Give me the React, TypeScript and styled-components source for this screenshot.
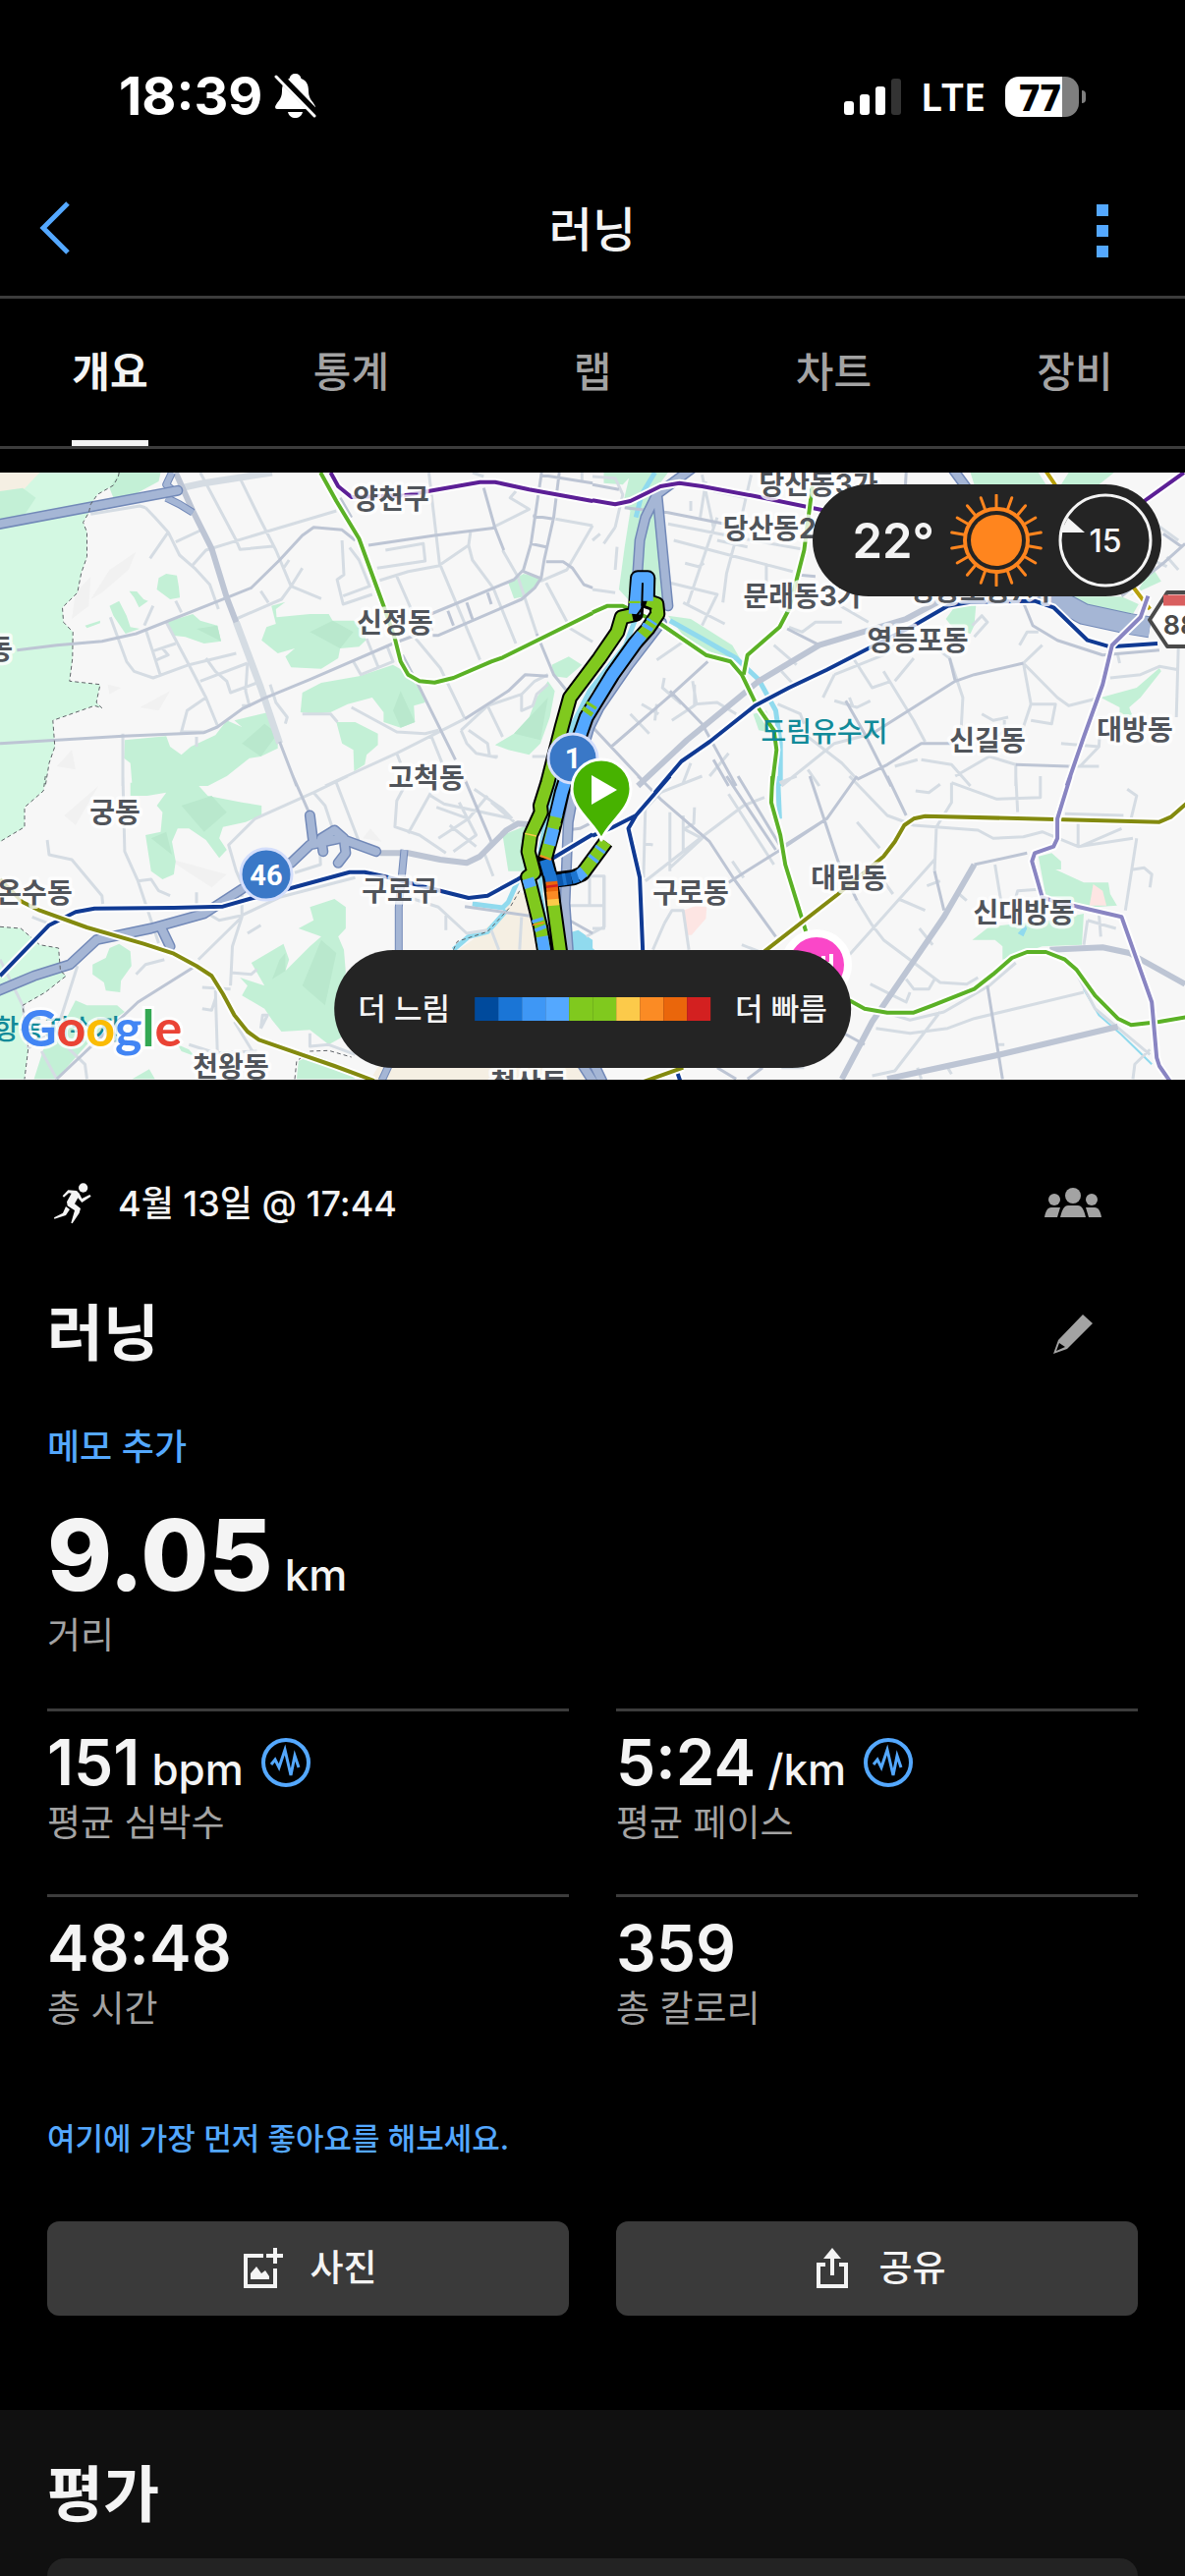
import React from "react";
import styled, { createGlobalStyle } from "styled-components";

const color = {
  bg: "#000000",
  raised: "#101010",
  card: "#232323",
  pill: "#242424",
  line: "#3c3c3c",
  button: "#3a3a3a",
  text: "#f4f4f4",
  muted: "#a3a3a3",
  link: "#54a8ff",
};

const GlobalStyle = createGlobalStyle`
  * { box-sizing: border-box; }
  body {
    margin: 0;
    background: ${color.bg};
    color: ${color.text};
    font-family: Inter, "Noto Sans CJK KR", sans-serif;
  }
  button {
    padding: 0;
    border: 0;
    background: none;
    color: inherit;
    font: inherit;
  }
  h1, h2, p, dl, dd, dt { margin: 0; }
  svg { display: block; }
`;

/* ---------- page frame ---------- */

const Page = styled.div`
  display: flex;
  flex-direction: column;
  min-height: 100vh;
`;

const StatusBar = styled.div`
  display: flex;
  align-items: center;
  justify-content: space-between;
  height: 162px;
  padding: 34px 101px 0 121px;
`;

const StatusGroup = styled.div<{ $gap: number }>`
  display: flex;
  align-items: center;
  gap: ${(p) => p.$gap}px;
`;

const Clock = styled.span`
  font-size: 54px;
  line-height: 64px;
  font-weight: 700;
  color: #fff;
`;

const Network = styled.span`
  font-family: "Noto Sans", sans-serif;
  font-size: 40px;
  line-height: 48px;
  font-weight: 600;
  color: #fff;
`;

const Battery = styled.div`
  display: flex;
  align-items: center;
  gap: 3px;
`;

const BatteryBody = styled.div`
  width: 75px;
  height: 41px;
  padding-left: 14px;
  border-radius: 14px;
  background: linear-gradient(to right, #fff 58px, #7f7f7f 58px);
  color: #000;
  font-family: "Noto Sans", sans-serif;
  font-size: 37px;
  line-height: 41px;
  font-weight: 800;
`;

const BatteryTip = styled.div`
  width: 4px;
  height: 13px;
  border-radius: 0 6px 6px 0;
  background: #7f7f7f;
`;

const NavBar = styled.header`
  display: grid;
  grid-template-columns: 1fr auto 1fr;
  align-items: center;
  height: 142px;
  border-bottom: 3px solid ${color.line};
`;

const NavTitle = styled.h1`
  padding-top: 4px;
  font-size: 48px;
  line-height: 64px;
  font-weight: 500;
  text-align: center;
`;

const IconButton = styled.button`
  display: flex;
  align-items: center;
  justify-content: center;
  width: 96px;
  height: 96px;
`;

const BackButton = styled(IconButton)`
  margin-left: 8px;
`;

const MoreButton = styled(IconButton)`
  justify-self: end;
  margin-right: 36px;
  padding-top: 6px;
`;

const Tabs = styled.nav`
  display: flex;
  justify-content: space-between;
  height: 153px;
  padding: 0 48px;
  margin-bottom: 24px;
  border-bottom: 3px solid ${color.line};
`;

const Tab = styled.button<{ $active?: boolean }>`
  display: flex;
  justify-content: center;
  width: 128px;
  padding-top: 6px;
  color: ${(p) => (p.$active ? color.text : color.muted)};
  font-size: 42px;
  line-height: 138px;
  font-weight: ${(p) => (p.$active ? 700 : 500)};

  span {
    border-bottom: 6px solid ${(p) => (p.$active ? color.text : "transparent")};
  }
`;

/* ---------- map overlays ---------- */

const MapFrame = styled.section`
  position: relative;
  aspect-ratio: 201 / 103;
  overflow: hidden;
  background: #f7f7f7;
`;

const Pill = styled.div`
  position: absolute;
  display: flex;
  align-items: center;
  border-radius: 60px;
  background: ${color.pill};
`;

const Weather = styled(Pill)`
  top: 12px;
  right: 24px;
  height: 114px;
  padding: 0 9px 0 40px;
  gap: 16px;
  font-size: 49px;
  font-weight: 600;
`;

const Legend = styled(Pill)`
  bottom: 12px;
  left: 50%;
  transform: translateX(-50%);
  height: 120px;
  padding: 0 24px;
  gap: 25px;
  font-size: 31px;
  line-height: 48px;
  font-weight: 500;
  white-space: nowrap;
`;

const Scale = styled.div`
  display: flex;
`;

const Swatch = styled.span<{ $fill: string }>`
  width: 24px;
  height: 24px;
  background: ${(p) => p.$fill};
`;

/* ---------- activity summary ---------- */

const Summary = styled.main`
  display: flex;
  flex-direction: column;
  padding: 78px 48px 96px;
`;

const Row = styled.div`
  display: flex;
  align-items: center;
  height: 96px;
  padding-right: 18px;
`;

const DateText = styled.p`
  flex: 1;
  margin-left: 26px;
  font-size: 36px;
  line-height: 48px;
  font-weight: 500;
`;

const TitleRow = styled(Row)`
  justify-content: space-between;
  margin: 37px 0 43px;
`;

const Title = styled.h2`
  font-size: 62px;
  line-height: 72px;
  font-weight: 700;
`;

const TextLink = styled.a<{ $small?: boolean }>`
  align-self: flex-start;
  color: ${color.link};
  font-size: ${(p) => (p.$small ? 31 : 36)}px;
  line-height: 48px;
  font-weight: 500;
  text-decoration: none;
`;

const Metric = styled.div`
  display: flex;
  flex-direction: column-reverse;
`;

const MetricCell = styled(Metric)`
  padding-top: 20px;
  border-top: 3px solid ${color.line};
`;

const MetricLabel = styled.dt`
  margin-top: 6px;
  color: ${color.muted};
  font-size: 37px;
  line-height: 48px;
`;

const MetricValue = styled.dd<{ $large?: boolean }>`
  display: flex;
  align-items: baseline;
  gap: 12px;
  height: ${(p) => (p.$large ? 104 : 64)}px;
  font-size: ${(p) => (p.$large ? 100 : 64)}px;
  line-height: ${(p) => (p.$large ? 104 : 64)}px;
  font-weight: ${(p) => (p.$large ? 800 : 600)};
`;

const Unit = styled.span`
  font-size: 44px;
  font-weight: 500;
`;

const PulseButton = styled.button`
  align-self: center;
  margin-left: 6px;
`;

const Headline = styled.dl`
  margin: 34px 0 50px;
`;

const MetricGrid = styled.dl`
  display: grid;
  grid-template-columns: 1fr 1fr;
  gap: 48px;
  margin-bottom: 84px;
`;

const Actions = styled.div`
  display: grid;
  grid-template-columns: 1fr 1fr;
  gap: 48px;
  margin-top: 60px;
`;

const ActionButton = styled.button`
  display: flex;
  align-items: center;
  justify-content: center;
  gap: 26px;
  height: 96px;
  padding-left: 4px;
  border-radius: 12px;
  background: ${color.button};
  font-size: 37px;
  line-height: 48px;
  font-weight: 500;
`;

const Review = styled.section`
  display: flex;
  flex: 1;
  flex-direction: column;
  gap: 28px;
  padding: 51px 48px 0;
  background: ${color.raised};
`;

const ReviewCard = styled.div`
  flex: 1;
  min-height: 18px;
  border-radius: 36px 36px 0 0;
  background: ${color.card};
`;

/* ---------- map data ---------- */

type TileName = "nw" | "ne" | "sw" | "se" | "route";

// Origin and units per map pixel of each tile.
const tiles: Record<TileName, [number, number, number, number]> = {
  nw: [0, -11, 2.6, 3],
  ne: [603, -11, 2.6, 3],
  sw: [0, 309, 2.6, 3],
  se: [603, 309, 2.6, 3],
  route: [500, 79, 3, 3],
};

const place = (tile: TileName, d: string) => {
  const [ox, oy, sx, sy] = tiles[tile];
  return d.replace(/(-?\d+),(-?\d+)/g, (_, x, y) =>
    `${Math.round((ox + +x / sx) * 10) / 10},${Math.round((oy + +y / sy) * 10) / 10}`
  );
};

type Layer = Partial<Record<TileName, string>>;
const merge = (layer: Layer) =>
  (Object.keys(layer) as TileName[]).map((t) => place(t, layer[t]!)).join(" ");

const forest = merge({
  nw: "M0,33 L315,33 L313,45 L300,72 L258,100 L240,130 L235,155 L220,185 L230,215 L230,290 L215,340 L205,400 L165,445 L168,490 L193,520 L192,600 L184,670 L265,680 L255,735 L270,752 L250,745 L140,790 L145,870 L130,920 L120,990 L0,990z",
  sw: "M0,0 L120,0 L115,45 L65,95 L65,155 L0,200z M0,460 L55,465 L105,515 L155,525 L160,595 L175,610 L120,660 L60,700 L75,830 L65,925 L0,925z",
});

const border = merge({
  nw: "M315,33 L313,45 L300,72 L258,100 L240,130 L235,155 L220,185 L230,215 L230,290 L215,340 L205,400 L165,445 L168,490 L193,520 L192,600 L184,670 L265,680 L255,735 L270,752 L250,745 L140,790 L145,870 L130,920 L120,990",
  sw: "M120,0 L115,45 L65,95 L65,155 L0,200 M0,460 L55,465 L105,515 L155,525 L160,595 L175,610 L120,660 L60,700 L75,830 L65,925 M780,925 L785,870 L820,840 L870,838 L930,858 M1200,530 L1210,505 L1290,475 L1350,400 L1375,350",
});

const sand = merge({
  nw: "M0,33 L105,33 L60,88 L0,100z",
  sw: "M1200,540 L1250,500 L1330,420 L1370,350 L1440,390 L1450,540z M1000,888 L1568,888 L1568,927 L980,927z",
});

const parks = merge({
  nw: "M0,90 L60,80 L95,110 L60,170 L0,175z M315,33 L425,33 L420,60 L380,85 L340,110 L300,110 L290,80z M420,355 L440,342 L468,347 L473,380 L476,415 L450,420 L415,390z M290,440 L315,425 L335,470 L345,505 L370,510 L332,525 L300,470z M342,395 L362,396 L380,420 L392,425 L368,445 L355,415z M225,500 L265,485 L265,493 L230,508z M440,490 L510,465 L530,485 L575,500 L585,548 L540,555 L490,535 L455,530z M718,440 L755,428 L730,450 L732,475 L820,465 L870,465 L880,485 L935,485 L965,505 L968,545 L950,565 L900,570 L895,600 L850,632 L770,628 L755,595 L780,570 L735,585 L692,545 L705,505 L730,495z M800,705 L850,675 L950,655 L1040,620 L1070,640 L1115,700 L1125,735 L1095,745 L1098,795 L1060,812 L1015,795 L1015,765 L985,720 L920,740 L875,765 L835,770 L795,765z M890,795 L940,795 L1000,830 L1000,865 L970,895 L965,925 L937,945 L935,880 L905,860z M330,850 L440,838 L450,870 L480,895 L505,870 L570,835 L600,790 L640,810 L620,790 L710,765 L735,830 L735,875 L690,900 L660,905 L600,960 L550,990 L350,990 L345,920 L328,905z M1345,370 L1385,342 L1430,355 L1395,410 L1360,418z M1460,620 L1505,595 L1540,620 L1500,660 L1465,655z M1450,670 L1468,700 L1455,780 L1430,860 L1400,895 L1345,880 L1310,865 L1360,830 L1400,780 L1420,720z",
  sw: "M345,20 L510,10 L550,60 L640,80 L692,90 L692,120 L650,140 L590,155 L580,190 L600,225 L580,250 L545,195 L500,160 L470,160 L455,200 L465,260 L460,300 L430,315 L400,290 L385,180 L425,170 L430,110 L415,90 L440,50 L390,60 L345,60z M245,575 L280,555 L290,525 L315,512 L345,535 L348,580 L320,625 L318,660 L280,655 L275,630 L245,605z M790,465 L830,440 L820,400 L885,375 L915,400 L915,465 L895,490 L910,530 L915,600 L885,700 L940,760 L900,800 L870,820 L820,775 L745,780 L720,745 L700,710 L640,670 L655,640 L635,615 L700,640 L665,570 L750,512 L765,560 L755,595 L820,520 L850,490z M1330,180 L1395,150 L1390,290 L1345,290z M180,730 L200,685 L230,700 L310,700 L330,720 L280,760 L230,820 L150,925 L90,925 L130,780z M470,820 L500,835 L515,855 L480,840z M350,925 L395,895 L410,925z M785,925 L790,870 L830,850 L900,880 L940,925z",
  ne: "M100,33 L200,33 L150,110 L165,150 L185,420 L110,440 L70,390 L85,260 L100,150 L80,130z M30,33 L110,33 L80,70 L30,65z M1000,33 L1180,33 L1200,70 L1010,70z M1260,33 L1380,33 L1340,70 L1240,70z M1480,320 L1505,365 L1420,410 L1445,390z M1240,412 L1400,412 L1445,435 L1430,465 L1330,455z M935,480 L960,440 L1015,435 L1010,500 L1000,525 L960,515z M200,470 L260,480 L370,560 L395,610 L380,610 L310,580 L240,530z M425,770 L460,760 L485,830 L440,820z M1345,720 L1440,690 L1500,630 L1505,640 L1450,720 L1420,750 L1430,780 L1395,780 L1395,750z",
  se: "M1180,245 L1215,235 L1240,260 L1240,285 L1225,285 L1300,325 L1365,325 L1370,360 L1388,395 L1330,400 L1200,370z M1005,500 L1050,460 L1210,440 L1300,420 L1295,515 L1190,520 L1085,560 L1085,520 L1065,500z",
});

const shade = merge({
  nw: "M820,520 L880,485 L935,520 L900,570z M1040,760 L1060,700 L1098,795 L1060,812z M520,510 L575,500 L585,548z M1360,830 L1450,720 L1430,850z M640,860 L700,800 L735,830 L690,900z",
  sw: "M480,90 L560,60 L600,110 L540,170z M850,500 L890,540 L860,700 L800,640z M740,560 L755,540 L755,595 L720,620z M400,190 L440,170 L455,240z",
});

const hills = merge({
  nw: "M240,420 L290,330 L360,275 L340,330 L270,400z M200,400 L240,350 L235,440 L190,480z M285,680 L320,690 L290,710z M370,750 L450,700 L420,760z M150,930 L190,880 L200,940z",
  sw: "M170,120 L260,30 L200,150z M440,250 L600,300 L560,340z M980,160 L1010,200 L960,190z",
});

const health = merge({
  se: "M1325,330 L1350,350 L1360,395 L1315,395z M240,410 L275,395 L302,400 L300,435 L262,485 L250,485z",
});

const water = merge({
  ne: "M205,485 L290,540 L380,600 L440,665 L485,760 L497,860 L497,990 M165,33 L130,100 L115,170",
  sw: "M1370,320 L1345,385 L1330,402 L1250,390 M1200,530 L1240,490 L1290,475 L1340,410",
  se: "M490,0 L495,130",
  route: "M440,210 L410,290 L300,430 L250,530 L200,680 L170,800 L150,920 L150,1050 L175,1200",
});

const streams = merge({ se: "M1300,650 L1340,730 L1400,790 L1480,880" });

const ponds = merge({
  sw: "M1500,480 L1530,470 L1568,500 L1568,535 L1500,530z",
  se: "M1125,480 L1145,455 L1150,465 L1140,490z M0,525 L10,535 L0,535z",
});

const minorRoads = merge({
  nw: "M385,140 L410,170 L445,215 L475,285 L515,325 L555,375 L578,450 M445,215 L397,295 M465,245 L530,210 M510,315 L545,270 L700,215 L890,150 M530,33 L625,240 L635,268 L722,258 M635,50 L690,180 L730,270 L770,380 L850,418 M770,380 L800,325 M770,380 L745,420 L625,480 M765,300 L750,325 M690,395 L710,430 M905,240 L910,345 L892,360 L908,435 L985,405 M925,262 L950,300 L978,380 L908,410 M1020,270 L1120,250 L1125,303 L998,325 M1005,362 L1080,335 L1160,318 L1240,255 L1245,215 M1135,33 L1163,310 L1270,605 M1240,255 L1250,300 L1305,385 L1365,555 M1305,200 L1400,145 L1350,110 L1365,90 M1470,175 L1568,195 M1330,270 L1370,350 L1420,525 M1050,350 L1088,450 M1100,540 L1165,630 L1230,785 M1430,365 L1500,330 L1568,195 M1445,370 L1510,510 L1568,550 M292,475 L335,610 L355,640 L405,660 L500,620 L625,585 M385,510 L425,655 M405,440 L382,500 M440,490 L500,620 L545,720 L575,805 M545,720 L495,760 L480,825 L545,825 M325,830 L325,990 M530,670 L655,615 M545,600 L570,640 L600,670 L610,705 L680,675 M655,615 L650,700 L660,745 L640,745 M405,578 L465,555 M430,570 L445,590 L415,605 M715,680 L730,735 L760,780 L755,800 M240,160 L370,135 L385,140 M800,770 L875,770 L893,795 M930,750 L1050,825 L1125,830 L1160,820 M860,990 L1050,890 L1230,785 M1050,890 L1060,920 M1140,835 L1170,920 M1220,820 L1235,860 L1260,890 L1315,903 M1240,820 L1290,860 L1295,895 M1220,820 L1290,745 L1380,710 L1415,670 L1450,650 M1380,710 L1380,760 L1410,745 L1420,710 L1450,680 M1290,745 L1330,840 M935,610 L955,650 L1040,610 L1025,565 M970,540 L1000,625 M465,425 L480,460 M1250,33 L1280,45 M1540,33 L1540,60 M520,840 L520,870",
  sw: "M325,0 L330,230 L365,320 L400,440 L420,510 M125,195 L130,240 L190,255 L270,365 L272,390 M365,320 L400,315 L420,350 L450,365 M920,0 L830,50 L675,130 L605,210 L625,290 L640,330 L640,430 L615,520 L610,640 M830,50 L860,90 L880,160 M890,20 L950,200 M640,430 L525,560 M940,310 L740,370 L640,425 L580,440 L550,420 M1085,0 L1050,75 L1045,155 L1110,180 L1180,235 M1140,50 L1080,175 M1140,60 L1175,85 L1355,130 M1290,60 L1240,130 L1160,190 M1215,80 L1260,180 L1200,230 M1155,95 L1240,130 M1300,200 L1280,230 L1305,305 M1255,40 L1330,100 L1355,130 M1260,215 L1190,150 M360,605 L385,575 L435,560 M205,580 L155,760 M610,600 L665,605 L680,590 M570,650 L575,840 M535,645 L610,650 M535,710 L560,715 L570,680 M655,480 L690,455 M690,770 L695,730 L708,730 L690,770 M500,820 L570,845 L680,840 M620,750 L700,900 M0,560 L60,700 L75,830 M110,840 L150,925 M75,830 L140,780 M180,830 L225,880 L230,925 M1080,370 L1160,400 L1235,480 L1290,470 M1180,420 L1180,470 M1380,430 L1375,530 M1300,470 L1320,530 M820,785 L820,825 L870,820 L940,850 M520,355 L520,400 M845,180 L848,270 L780,295 M85,430 L140,455",
  ne: "M0,45 L60,50 L80,100 L60,200 M30,250 L60,200 M290,40 L320,200 M420,40 L390,190 L355,340 L345,430 M330,170 L250,440 M300,60 L285,170 M200,190 L400,235 L570,270 M215,240 L380,290 L530,335 M205,370 L330,405 L290,500 M240,430 L350,495 M245,310 L280,320 L295,310 M460,310 L460,380 M260,120 L260,150 M320,90 L410,110 M330,240 L410,260 M0,240 L20,220 M0,390 L60,400 M65,260 L60,330 M520,505 L555,520 L590,490 L660,490 M640,430 L730,490 M540,620 L480,560 M500,640 L540,690 M640,650 L770,590 L800,560 M640,650 L610,720 M690,600 L740,690 L790,670 M770,640 L850,790 L880,855 M850,600 L800,670 M900,560 L945,600 L980,720 L975,830 M1140,615 L1230,720 L1260,745 L1345,720 M1140,615 L1160,740 L1120,880 M1160,740 L1225,740 L1215,800 L1160,790 M1190,560 L1140,615 M1130,560 L1150,520 L1180,520 M1370,660 L1450,650 L1500,625 L1550,635 M1550,570 L1545,780 M1390,590 L1395,615 M960,960 L1050,900 L1120,925 L1120,990 M1025,870 L1060,850 L1090,820 L1090,780 M1030,770 L1060,790 L1100,780 M870,910 L950,925 L1000,990 M800,930 L860,910 M570,940 L600,990 M500,990 L640,860 L740,830 M570,840 L660,920 L700,970 M270,680 L270,740 L330,735 L380,770 M190,660 L185,690 L235,740 M265,670 L275,740 L210,790 M170,605 L240,550 M100,770 L150,830 M130,740 L175,770 M170,740 L165,790 M1260,930 L1340,930 M1240,860 L1340,870 L1290,930 M1345,780 L1340,870 M1480,300 L1520,320 M1520,290 L1550,330 M1490,190 L1550,240 M1005,500 L1030,470 L1045,490 L1010,535 M640,730 L700,750 L735,730 M680,720 L690,750 M490,740 L550,770 L560,800 M310,960 L360,890 M240,980 L260,920",
  se: "M0,465 L30,465 L30,305 L0,305 M205,110 L205,290 M140,100 L135,310 M140,320 L290,185 L400,90 L455,65 M240,120 L240,230 M205,280 L290,190 L240,160 M360,55 L480,270 M495,20 L540,0 M140,100 L180,50 L290,0 M270,95 L268,145 L245,160 M680,0 L780,120 L850,150 L1020,165 L1060,190 L1140,185 L1190,170 L1285,215 L1430,190 M1285,130 L1285,215 M1290,215 L1400,160 M950,20 L1070,70 L1185,65 L1185,0 M950,20 L950,80 L910,155 L905,290 M905,255 L680,545 M810,375 L880,410 M740,455 L770,500 L920,630 L990,635 L1020,615 M700,380 L740,455 M1065,270 L1085,410 M1250,115 L1405,120 M1440,190 L1410,410 M1430,285 L1460,280 L1480,300 L1475,340 M1415,40 L1440,60 L1425,130 M1310,440 L1385,465 M1340,420 L1345,490 M1300,515 L1310,440 M735,635 L830,690 L840,660 M830,620 L850,650 L890,650 L905,620 M685,690 L840,745 L930,720 L1050,640 L1120,570 M750,770 L840,785 L940,770 L1010,740 L1300,660 M920,720 L800,900 L740,915 M1280,600 L1330,710 L1475,850 M1430,925 L1435,880 L1475,835 M1120,370 L1125,350 L1190,345 M190,450 L210,410 L240,410 L255,530 M190,450 L160,530 M700,140 L760,220 M770,320 L795,360 M855,45 L890,50 L920,25 M1120,0 L1125,110 M865,465 L900,515 M395,515 L450,540 M370,260 L400,310 M135,205 L160,210 M940,890 L950,910 M860,890 L870,925 M500,890 L560,890 M1070,820 L1090,820 M885,335 L920,320 M970,360 L990,380",
  route: "M230,1085 L345,1085 M300,995 L300,1085 M225,995 L345,995 L345,1150 L290,1180 M0,630 L20,630 M125,630 L175,630 M0,770 L70,830",
});

const majorRoads = merge({
  nw: "M45,575 L150,560 L270,548 L360,525 L600,415 L665,385 L740,300 L800,225 L830,200 L905,208 L940,240 M740,855 L785,990 M0,860 L325,838 L540,827 L575,810 L640,755 L700,722 L820,665 L1040,555 L1145,510 M975,255 L1150,225 L1310,202 M1280,80 L1310,202 L1333,270 M1433,33 L1405,250 L1385,330 L1360,360 L1140,465 M1480,33 L1465,170 L1440,300 L1432,355 L1415,385 L1380,420 L1160,530 L1145,530 M1385,335 L1432,357 M1410,165 L1465,175 M1403,250 L1445,260 M1185,455 L1200,500 M1235,430 L1250,480 M1290,400 L1300,435 M1430,40 L1568,65 M1445,305 L1490,305 L1515,325 L1545,375 L1568,385 M1420,525 L1465,650 L1500,700 M1065,590 L1115,700 L1205,910 M1230,785 L1345,700 L1390,650 L1450,655 M900,110 L930,170",
  sw: "M775,0 L825,130 M1230,10 L1300,200 M150,925 L365,690 L510,585 M1230,398 L1420,430 M1490,430 L1568,480",
  ne: "M515,510 L600,560 M0,810 L130,970 M50,870 L210,710 L305,610 M205,700 L290,800 L380,990 M320,910 L360,990 M670,730 L720,830 L790,990 M700,970 L780,925 L870,860 L950,860 M740,830 L960,670 L1010,650 L1140,615 M945,600 L960,670 M1140,430 L1165,500 L1230,545 L1350,590 L1500,575 M85,140 L200,155 L350,190 M540,345 L590,350 M1400,410 L1510,310 L1568,250 M1120,925 L1260,930 M1510,220 L1560,260 M830,33 L828,70 M0,70 L70,85",
  se: "M355,0 L485,225 M385,0 L495,210 M575,0 L650,260 L700,380 M780,0 L830,120 M120,0 L180,70 L310,200 L375,315 L485,490 M360,325 L490,230 L620,130 L700,0 M510,210 L620,130 M905,290 L930,410 M1010,270 L1150,235 M1045,640 L1085,925 M665,785 L720,820 M410,925 L450,890 M330,890 L380,925",
  route: "M230,855 L270,850 L330,820",
});

const arterials = merge({
  nw: "M465,33 L510,150 L560,265 L600,415 L625,490",
  sw: "M1005,235 L1080,235 L1165,255 L1235,265 L1270,245 L1340,165 L1370,145 L1430,150",
  ne: "M120,990 L250,850 L440,670 L600,560 L830,480 L960,400",
  se: "M1010,270 L930,430 L740,750 L660,925 M780,925 L1080,850 L1390,765 M1210,530 L1350,523 L1420,540 L1568,635",
});

const wideLight = merge({
  nw: "M625,490 L690,690 L740,860 M480,80 L540,65 L720,33",
});

const highways = merge({
  nw: "M-10,192 L470,88",
  sw: "M-10,658 L90,610 L185,575 L255,500 L400,465 L540,420 L640,345 M770,265 L820,210 L900,190 L995,230 M820,120 L828,195 M855,230 L850,190 L885,165 L910,190 L915,235 L895,265 M425,460 L450,520 M1540,880 L1568,930",
  ne: "M270,15 L170,100 L140,170 L125,240 L118,360 M172,110 L188,300 L200,440 M955,25 L990,80",
  route: "M520,220 L420,350 L330,480 L300,540 L270,640 L235,830 L225,1080 L235,1220",
  se: "M0,870 L25,930",
});

const ramps = merge({
  nw: "M465,95 L440,70 L455,33 M440,110 L475,130 L510,155",
  sw: "M1070,225 L1055,400 L1055,535 M1030,880 L1010,930",
});

const expressway = merge({ ne: "M1180,390 L1300,465 L1420,495 L1475,505" });

const subways: { stroke: string; d: string }[] = [
  {
    stroke: "#5c1f96",
    d: merge({
      nw: "M875,33 L895,75 L930,108 L1070,103 L1270,62 L1310,62 L1400,85 L1568,120",
      ne: "M0,118 L60,130 L100,120 L180,75 L230,65 L290,75 L430,105 L610,148 M1460,120 L1565,33",
    }),
  },
  {
    stroke: "#5bb126",
    d: merge({
      nw: "M848,33 L890,120 L950,235 L1015,440 L1045,540 L1060,610 L1080,650 L1110,670 L1150,674 L1200,660 L1300,610 L1330,598 L1568,462",
      ne: "M0,460 L40,440 L80,440 L180,495 L300,590 L365,610 L395,650 L435,745 L480,820 L487,880 L475,990 M582,75 L560,270 L520,450 L495,505 L410,590 L400,650",
      se: "M476,0 L473,80 L497,180 L510,270 L565,475 M680,685 L720,710 L780,722 L850,722 L900,700 L1010,650 L1060,605 L1110,555 L1150,537 L1200,537 L1250,560 L1280,590 L1330,670 L1390,740 L1425,760 L1500,750 L1575,735",
    }),
  },
  {
    stroke: "#103a93",
    d: merge({
      sw: "M0,610 L130,455 L200,415 L250,404 L460,402 L590,398 L660,375 L770,342 L925,293 L965,293 L1025,308 L1170,352 L1240,372 L1290,365 L1370,315 L1568,178",
      ne: "M165,1010 L235,915 L310,855 L430,745 L520,690 L620,635 L730,570 L850,500 L940,440 L1000,428 L1170,425 L1220,445 L1310,545 L1370,565 L1495,555",
      se: "M0,182 L50,158 L115,120 L205,0 M115,120 L95,160 L125,310 L133,535 M220,890 L232,930",
    }),
  },
  {
    stroke: "#838a0f",
    d: merge({
      sw: "M0,315 L60,385 L105,410 L230,462 L380,512 L460,542 L520,580 L560,610 L590,665 L620,730 L655,780 L685,805 L760,835 L885,885 L990,930",
      se: "M130,935 L240,890 M455,535 L650,360 L770,245 L800,200 L825,150 L850,130 L880,122 L1500,140 L1530,125 L1575,80",
    }),
  },
  { stroke: "#b7a00c", d: merge({ ne: "M1195,20 L1225,72 M1432,385 L1475,450" }) },
  {
    stroke: "#8985c2",
    d: merge({
      ne: "M1470,410 L1450,475 L1375,560 L1350,680 L1300,840 L1255,990",
      se: "M1265,0 L1230,130 L1230,190 L1220,215 L1170,235 L1163,260 L1190,370 L1215,380 L1400,430 L1440,560 L1480,690 L1493,860 L1500,885 L1530,935",
    }),
  },
];

const track = place(
  "route",
  "M165,1240 L150,1150 L118,1020 L112,998 L130,985 L113,920 L120,870 L152,800 L150,780 L172,710 L215,540 L240,450 L330,330 L385,250 L398,205 L440,195 L447,85 L478,85 L476,155 L505,165 L508,195 L478,240 L438,285 L370,380 L290,510 L262,590 L215,740 L190,850 L165,940 L180,1000 L190,1080 L212,1240 M350,890 L278,988 L250,1000 L183,1008"
);

const pace: { stroke: string; d: string }[] = [
  { stroke: "#80c91e", d: "M350,890 L278,988 M165,1240 L150,1150 L118,1020 L112,998 L130,985 L113,920 L120,870 L152,800 L150,780 L172,710 L215,540 L240,450 L330,330 L385,250 L398,205 L430,198 M476,155 L505,165 L508,195 L478,240 L450,270 M200,805 L165,940 M190,1080 L212,1240" },
  { stroke: "#54a8ff", d: "M437,195 L447,85 L478,85 L476,155 M460,258 L438,285 L370,380 L290,510 L262,590 L215,740 L197,815 M190,850 L178,900 M112,1003 L120,1030 M140,1125 L143,1135 M148,1150 L152,1160 M155,1180 L165,1240 M283,980 L262,998 M315,938 L309,946 M335,910 L330,917 M492,215 L488,221 M480,230 L474,240" },
  { stroke: "#80c91e", d: "M308,470 L303,478 M298,487 L290,498 M437,155 L437,162 M195,830 L193,840" },
  { stroke: "#1c75d1", d: "M165,945 L178,990 M265,996 L245,1002" },
  { stroke: "#0a57ad", d: "M245,1002 L195,1010" },
  { stroke: "#1c75d1", d: "M178,985 L185,1015 M228,1004 L218,1006" },
  { stroke: "#ea660b", d: "M184,1012 L187,1045" },
  { stroke: "#d32020", d: "M185,1022 L186,1030" },
  { stroke: "#fb8b24", d: "M186,1042 L188,1068 M167,936 L165,942 M143,1139 L144,1143" },
  { stroke: "#fcca4a", d: "M188,1066 L190,1085 M121,867 L120,871" },
];

const areaLabels: [string, number, number][] = [
  ["동", 0, 190],
  ["양천구", 398, 37],
  ["신정동", 402, 163],
  ["당산동3가", 833, 22],
  ["당산동2가", 796, 67],
  ["문래동3가", 817, 136],
  ["영등포동7가", 998, 130],
  ["영등포동", 934, 181],
  ["신길동", 1005, 283],
  ["대방동", 1155, 272],
  ["고척동", 434, 321],
  ["궁동", 117, 356],
  ["온수동", 35, 438],
  ["구로구", 407, 436],
  ["천왕동", 235, 615],
  ["구로동", 703, 438],
  ["대림동", 864, 423],
  ["신대방동", 1042, 458],
  ["철산동", 538, 632],
];

const waterLabels: [string, number, number][] = [
  ["도림유수지", 839, 274],
  ["항동저수지", 58, 577],
];

const MapSvg = styled.svg`
  width: 100%;
  height: 100%;

  path { fill: none; stroke-linejoin: round; }
  text {
    font-family: Inter, "Noto Sans CJK KR", sans-serif;
    text-anchor: middle;
  }
`;

const Area = styled.path`
  && { fill: ${(p) => p.color}; }
`;

const AreaLabel = styled.text<{ $water?: boolean }>`
  font-size: 28px;
  font-weight: ${(p) => (p.$water ? 500 : 700)};
  fill: ${(p) => (p.$water ? "#118a99" : "#50545a")};
  stroke: #fff;
  stroke-opacity: 0.8;
  stroke-width: ${(p) => (p.$water ? 0 : 7)}px;
  stroke-linejoin: round;
  paint-order: stroke;
`;

const MarkerText = styled.text`
  && { font-family: Roboto, sans-serif; }
  font-size: 29px;
  font-weight: 700;
  fill: #fff;
`;

const GoogleMark = styled.text`
  && { font-family: Lato, sans-serif; text-anchor: start; }
  font-size: 52px;
  font-weight: 700;
  stroke: #fff;
  stroke-opacity: 0.8;
  stroke-width: 6px;
  paint-order: stroke;
`;

const googleLetters: [string, string][] = [
  ["G", "#4285f4"],
  ["o", "#ea4335"],
  ["o", "#fbbc05"],
  ["g", "#4285f4"],
  ["l", "#34a853"],
  ["e", "#ea4335"],
];

function RouteMap() {
  return (
    <MapSvg viewBox="0 0 1206 618" preserveAspectRatio="xMidYMid slice" role="img" aria-label="러닝 경로">
      <rect width="1206" height="618" fill="#f7f7f7" />
      <Area d={hills} color="#f1f1f1" />
      <Area d={forest} color="#d3f8e2" />
      <Area d={sand} color="#f5efe3" />
      <Area d={parks} color="#c3f0d6" />
      <Area d={shade} color="#b9e8cd" />
      <Area d={health} color="#fde5e3" />
      <Area d={ponds} color="#90daee" />
      <path d={water} stroke="#90daee" strokeWidth="5" />
      <path d={streams} stroke="#90daee" strokeWidth="2" />
      <path d={minorRoads} stroke="#d5dce3" strokeWidth="3" />
      <path d={wideLight} stroke="#d5dce3" strokeWidth="7" />
      <path d={majorRoads} stroke="#bdc5d4" strokeWidth="3" />
      <path d={arterials} stroke="#bdc5d4" strokeWidth="6" />
      <path d={ramps} stroke="#7289b8" strokeWidth="8" />
      <path d={ramps} stroke="#a5b6d5" strokeWidth="6" />
      <path d={highways} stroke="#7289b8" strokeWidth="11" strokeLinecap="round" />
      <path d={highways} stroke="#a5b6d5" strokeWidth="8" strokeLinecap="round" />
      <path d={expressway} stroke="#7289b8" strokeWidth="22" />
      <path d={expressway} stroke="#a5b6d5" strokeWidth="20" />
      <path d={border} stroke="#5f6368" strokeWidth="1" strokeDasharray="4 3" />
      {subways.map((line) => (
        <g key={line.stroke}>
          <path d={line.d} stroke="#fff" strokeWidth="8" />
          <path d={line.d} stroke={line.stroke} strokeWidth="4" />
        </g>
      ))}
      {areaLabels.map(([name, x, y]) => (
        <AreaLabel key={name} x={x} y={y}>{name}</AreaLabel>
      ))}
      {waterLabels.map(([name, x, y]) => (
        <AreaLabel key={name} $water x={x} y={y}>{name}</AreaLabel>
      ))}

      <path d={track} stroke="#000" strokeWidth="16" />
      {pace.map((p, i) => (
        <path key={i} d={place("route", p.d)} stroke={p.stroke} strokeWidth="12" />
      ))}
      <path d={place("route", "M462,100 L460,168 L490,180 M440,205 L462,175")} stroke="#000" strokeWidth="2" />

      <circle cx="271" cy="409" r="26" fill="#3a78c7" stroke="#d4defb" strokeWidth="3" />
      <MarkerText x="271" y="420">46</MarkerText>
      <circle cx="583" cy="291" r="25" fill="#3a78c7" stroke="#d4defb" strokeWidth="3" />
      <MarkerText x="583" y="301">1</MarkerText>

      <path d="M1188,122 H1220 V177 H1188 L1170,150z" style={{ fill: "#fff" }} stroke="#4a4a4a" strokeWidth="4" />
      <path d="M1184,130 H1220" stroke="#d95f5f" strokeWidth="11" />
      <text x="1201" y="165" fontSize="27" fontWeight="600" fill="#4a4a4a">88</text>

      <circle cx="831" cy="501" r="32" fill="#fa47c8" stroke="#fff" strokeWidth="8" />
      <path d="M838,492 v14 M846,490 v20 M838,500 h8" stroke="#fff" strokeWidth="4" />

      <Area
        d="M612,374 C607,358 582,344 582,322 A30,30 0 1 1 642,322 C642,344 617,358 612,374z"
        color="#47b200"
        stroke="#fff"
        strokeWidth="3"
      />
      <Area d="M602,308 L628,323 L602,338z" color="#fff" />

      <GoogleMark x="20" y="584">
        {googleLetters.map(([letter, fill], i) => (
          <tspan key={i} fill={fill}>{letter}</tspan>
        ))}
      </GoogleMark>
    </MapSvg>
  );
}

/* ---------- icons ---------- */

const BellOff = () => (
  <svg width="43" height="46" viewBox="0 0 43 46" aria-hidden="true">
    <path d="M21.500,0 C18,0 16,2 15.500,5 C9,7 8,13 8,18 C8,27 2,29 1,34 Q1,36 3,36 H40 Q42,36 42,34 C41,29 35,27 35,18 C35,13 34,7 27.500,5 C27,2 25,0 21.500,0z M14,39 H29 C28,43 25,45 21.500,45 C18,45 15,43 14,39z" fill="#fff" />
    <path d="M3,0 L43,41" stroke="#000" strokeWidth="8" />
    <path d="M2,3 L41,43" stroke="#fff" strokeWidth="3" strokeLinecap="round" />
  </svg>
);

const Signal = () => (
  <svg width="58" height="37" viewBox="0 0 58 37" aria-hidden="true">
    <g fill="#fff">
      <rect x="0" y="23" width="10" height="14" rx="3" />
      <rect x="16" y="16" width="10" height="21" rx="3" />
      <rect x="32" y="8" width="10" height="29" rx="3" />
    </g>
    <rect x="48" y="0" width="10" height="37" rx="3" fill="#333" />
  </svg>
);

const Chevron = () => (
  <svg width="32" height="54" viewBox="0 0 32 54" fill="none" aria-hidden="true">
    <path d="M29,2 L4,27 L29,52" stroke={color.link} strokeWidth="5" />
  </svg>
);

const Dots = () => (
  <svg width="12" height="54" viewBox="0 0 12 54" fill={color.link} aria-hidden="true">
    <rect width="12" height="12" />
    <rect y="21" width="12" height="12" />
    <rect y="42" width="12" height="12" />
  </svg>
);

const Sun = () => (
  <svg width="94" height="94" viewBox="-47 -47 94 94" aria-label="맑음">
    <circle r="26" fill="#ff851e" />
    <circle r="32" fill="none" stroke="#ff851e" strokeWidth="4" />
    {Array.from({ length: 18 }, (_, i) => (
      <line key={i} y1="-33" y2="-46" stroke="#ff851e" strokeWidth="3" strokeLinecap="round" transform={`rotate(${i * 20})`} />
    ))}
  </svg>
);

const WindDial = styled.div`
  display: grid;
  place-items: center;
  font-size: 32px;
  font-weight: 500;

  > * { grid-area: 1 / 1; }
`;

const Dial = () => (
  <svg width="96" height="96" viewBox="-48 -48 96 96" aria-hidden="true">
    <circle r="46" fill="none" stroke={color.text} strokeWidth="3" />
    <path d="M-46,-8 L-38,-23 L-21,-8z" fill={color.text} />
  </svg>
);

const Runner = () => (
  <svg width="46" height="46" viewBox="22 38 138 138" aria-hidden="true">
    <g fill={color.text}>
      <circle cx="132" cy="59" r="14" />
      <path d="M69,84 L86,66 L112,68 L120,76 L128,92 L152,80 L156,85 L128,104 L116,90 L106,108 L124,122 L120,136 L99,168 L95,166 L106,128 L84,114 L82,102 L96,76 L88,75 L73,88z" />
      <path d="M79,116 L91,125 L79,143 L44,154 L43,150 L70,136z" />
    </g>
  </svg>
);

const People = () => (
  <svg width="58" height="32" viewBox="0 0 58 32" fill={color.muted} aria-hidden="true">
    <circle cx="29" cy="8" r="8" />
    <circle cx="10" cy="12" r="6" />
    <circle cx="48" cy="12" r="6" />
    <path d="M16,30 C18,22 20,18 24,18 H34 C38,18 40,22 42,30z" />
    <path d="M0,30 C1,24 3,20 7,20 H16 L13,30z" />
    <path d="M58,30 C57,24 55,20 51,20 H42 L45,30z" />
  </svg>
);

const Pencil = () => (
  <svg width="42" height="42" viewBox="0 0 42 42" fill={color.muted} aria-hidden="true">
    <path d="M31,1 L41,10 L15,36 L1,41 L6,27z M7,30 L4,38 L13,34z" fillRule="evenodd" />
  </svg>
);

const Pulse = () => (
  <svg width="50" height="50" viewBox="0 0 50 50" fill="none" stroke={color.link} aria-hidden="true">
    <circle cx="25" cy="25" r="23" strokeWidth="4" />
    <path d="M10,27 L14,22 L18,30 L24,12 L30,38 L34,18 L38,30" strokeWidth="3" />
  </svg>
);

const AddPhoto = () => (
  <svg width="42" height="42" viewBox="0 0 42 42" aria-hidden="true">
    <path d="M21,8 H3 V39 H33 V21" fill="none" stroke={color.text} strokeWidth="4" />
    <path d="M33,0 V16 M24,8 H41" stroke={color.text} strokeWidth="4" />
    <path d="M8,32 V26 L14,19 L19,26 L23,23 L27,29 V32z" fill={color.text} />
  </svg>
);

const Share = () => (
  <svg width="42" height="42" viewBox="-4 0 42 42" aria-hidden="true">
    <path d="M10,17 H3 V39 H31 V17 H24" fill="none" stroke={color.text} strokeWidth="4" />
    <path d="M17,28 V5" stroke={color.text} strokeWidth="4" />
    <path d="M8,11 L17,0 L26,11z" fill={color.text} />
  </svg>
);

/* ---------- screen ---------- */

const tabs = ["개요", "통계", "랩", "차트", "장비"];

const paceScale = [
  "#004a9c", "#1a75d6", "#3e97f5", "#54a8ff", "#80c91e",
  "#80c91e", "#fcca4a", "#fb8b24", "#ea660b", "#d32020",
];

const metrics = [
  { label: "평균 심박수", value: "151", unit: "bpm", chart: true },
  { label: "평균 페이스", value: "5:24", unit: "/km", chart: true },
  { label: "총 시간", value: "48:48" },
  { label: "총 칼로리", value: "359" },
];

export default function App() {
  return (
    <Page>
      <GlobalStyle />
      <StatusBar>
        <StatusGroup $gap={12}>
          <Clock>18:39</Clock>
          <BellOff />
        </StatusGroup>
        <StatusGroup $gap={20}>
          <Signal />
          <Network>LTE</Network>
          <Battery>
            <BatteryBody>77</BatteryBody>
            <BatteryTip />
          </Battery>
        </StatusGroup>
      </StatusBar>

      <NavBar>
        <BackButton aria-label="뒤로"><Chevron /></BackButton>
        <NavTitle>러닝</NavTitle>
        <MoreButton aria-label="더 보기"><Dots /></MoreButton>
      </NavBar>

      <Tabs>
        {tabs.map((name, i) => (
          <Tab key={name} $active={i === 0}><span>{name}</span></Tab>
        ))}
      </Tabs>

      <MapFrame>
        <RouteMap />
        <Weather>
          <span>22°</span>
          <Sun />
          <WindDial><Dial /><span>15</span></WindDial>
        </Weather>
        <Legend>
          <span>더 느림</span>
          <Scale>
            {paceScale.map((fill, i) => <Swatch key={i} $fill={fill} />)}
          </Scale>
          <span>더 빠름</span>
        </Legend>
      </MapFrame>

      <Summary>
        <Row>
          <Runner />
          <DateText>4월 13일 @ 17:44</DateText>
          <IconButton aria-label="공개 범위"><People /></IconButton>
        </Row>
        <TitleRow>
          <Title>러닝</Title>
          <IconButton aria-label="이름 편집"><Pencil /></IconButton>
        </TitleRow>
        <TextLink href="#memo">메모 추가</TextLink>
        <Headline>
          <Metric>
            <MetricLabel>거리</MetricLabel>
            <MetricValue $large>9.05<Unit>km</Unit></MetricValue>
          </Metric>
        </Headline>
        <MetricGrid>
          {metrics.map((m) => (
            <MetricCell key={m.label}>
              <MetricLabel>{m.label}</MetricLabel>
              <MetricValue>
                {m.value}
                {m.unit && <Unit>{m.unit}</Unit>}
                {m.chart && <PulseButton aria-label={`${m.label} 차트`}><Pulse /></PulseButton>}
              </MetricValue>
            </MetricCell>
          ))}
        </MetricGrid>
        <TextLink $small href="#like">여기에 가장 먼저 좋아요를 해보세요.</TextLink>
        <Actions>
          <ActionButton><AddPhoto />사진</ActionButton>
          <ActionButton><Share />공유</ActionButton>
        </Actions>
      </Summary>

      <Review>
        <Title>평가</Title>
        <ReviewCard />
      </Review>
    </Page>
  );
}
